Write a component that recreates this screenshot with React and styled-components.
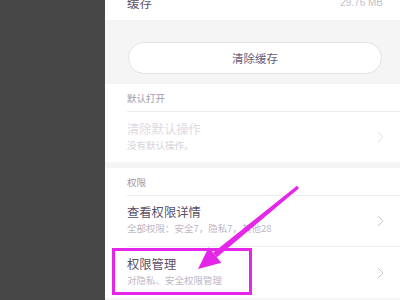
import React from "react";
import styled, { createGlobalStyle } from "styled-components";

const GlobalStyle = createGlobalStyle`
  html, body {
    margin: 0;
    padding: 0;
    width: 400px;
    height: 300px;
    overflow: hidden;
    background: #474747;
    font-family: "Noto Sans CJK SC", "Noto Sans", sans-serif;
  }
`;

const Stage = styled.div`
  position: relative;
  width: 400px;
  height: 300px;
  display: flex;
  overflow: hidden;
`;

const Side = styled.div`
  width: 105px;
  flex-shrink: 0;
  background: #474747;
`;

const Phone = styled.div`
  flex: 1;
  background: #f5f5f6;
  display: flex;
  flex-direction: column;
`;

const TopRow = styled.div`
  height: 20px;
  background: #fff;
  display: flex;
  justify-content: space-between;
  align-items: flex-start;
  padding: 0 17px 0 22px;
  overflow: hidden;
`;

const TopLabel = styled.span`
  margin-top: -7px;
  font-size: 12.5px;
  color: #5e5470;
`;

const TopValue = styled.span`
  margin-top: -3px;
  font-size: 10px;
  color: #c4bfcb;
  font-family: "Liberation Sans", sans-serif;
`;

const ButtonBand = styled.div`
  padding: 22px 18px 10px 23px;
`;

const PillButton = styled.div`
  height: 30px;
  border: 1px solid #e4e4e6;
  border-radius: 16px;
  background: #fff;
  display: flex;
  align-items: center;
  justify-content: center;
  font-size: 11.5px;
  color: #685d7a;
`;

const Section = styled.div`
  background: #fff;
  margin-bottom: ${(p) => (p.$gap ? "6px" : "0")};
`;

const Label = styled.div`
  height: 27px;
  margin-left: 22px;
  display: flex;
  align-items: center;
  font-size: 9.5px;
  color: #9f97ab;
  border-bottom: 1px solid #ededef;
`;

const Item = styled.div`
  height: ${(p) => p.$h}px;
  margin-left: 22px;
  padding-right: 16px;
  display: flex;
  align-items: center;
  justify-content: space-between;
  border-bottom: ${(p) => (p.$line ? "1px solid #ededef" : "none")};
`;

const Texts = styled.div`
  display: flex;
  flex-direction: column;
  margin-top: ${(p) => p.$dy || 0}px;
`;

const Title = styled.div`
  font-size: 12.3px;
  line-height: 17px;
  color: ${(p) => (p.$off ? "#dedae3" : "#5a5068")};
`;

const Sub = styled.div`
  font-size: 9.5px;
  line-height: 13px;
  margin-top: 1px;
  color: ${(p) => (p.$off ? "#d6d2db" : "#beb7c7")};
`;

const Highlight = styled.div`
  position: absolute;
  left: 112px;
  top: 248px;
  width: 134px;
  height: 41px;
  border: 3px solid #e526e8;
`;

const ArrowLayer = styled.svg`
  position: absolute;
  left: 0;
  top: 0;
  pointer-events: none;
`;

function Chevron({ off }) {
  return (
    <svg width="7" height="12" viewBox="0 0 7 12">
      <path
        d="M1 1 L6 6 L1 11"
        fill="none"
        stroke={off ? "#e2e0e5" : "#c9c6cd"}
        strokeWidth="1"
      />
    </svg>
  );
}

export default function App() {
  return (
    <>
      <GlobalStyle />
      <Stage>
        <Side />
        <Phone>
          <TopRow>
            <TopLabel>缓存</TopLabel>
            <TopValue>29.76 MB</TopValue>
          </TopRow>
          <ButtonBand>
            <PillButton>清除缓存</PillButton>
          </ButtonBand>
          <Section $gap>
            <Label>默认打开</Label>
            <Item $h={50}>
              <Texts $dy={-1}>
                <Title $off>清除默认操作</Title>
                <Sub $off>没有默认操作。</Sub>
              </Texts>
              <Chevron off />
            </Item>
          </Section>
          <Section>
            <Label>权限</Label>
            <Item $h={50} $line>
              <Texts $dy={-4}>
                <Title>查看权限详情</Title>
                <Sub>全部权限：安全7，隐私7，其他28</Sub>
              </Texts>
              <Chevron />
            </Item>
            <Item $h={51}>
              <Texts $dy={-3}>
                <Title>权限管理</Title>
                <Sub>对隐私、安全权限管理</Sub>
              </Texts>
              <Chevron />
            </Item>
          </Section>
        </Phone>
        <Highlight />
        <ArrowLayer width="400" height="300" viewBox="0 0 400 300">
          <polygon
            points="299,188.2 297,185.8 213.1,252.7 216.9,257.3"
            fill="#e526e8"
          />
          <polygon points="198,269 208.7,247.3 221.3,262.7" fill="#e526e8" />
        </ArrowLayer>
      </Stage>
    </>
  );
}
